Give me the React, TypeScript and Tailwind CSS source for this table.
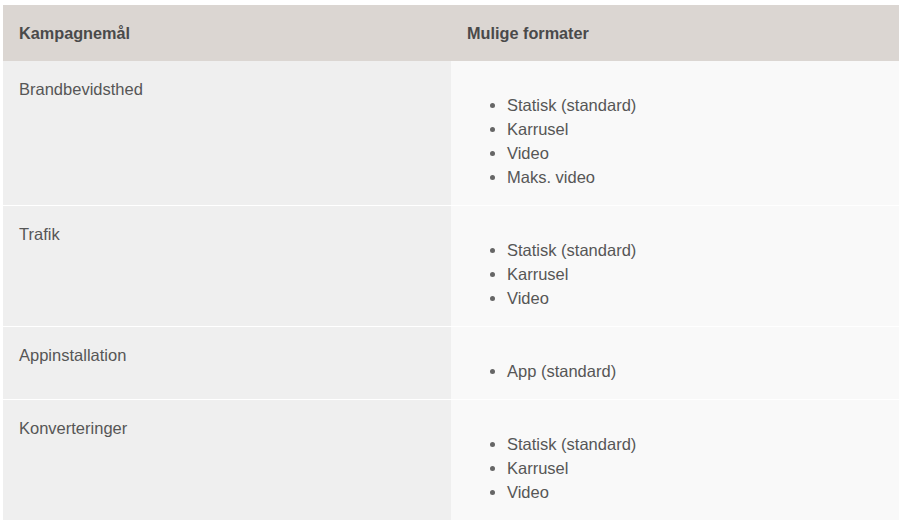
const rows: { goal: string; formats: string[] }[] = [
  { goal: "Brandbevidsthed", formats: ["Statisk (standard)", "Karrusel", "Video", "Maks. video"] },
  { goal: "Trafik", formats: ["Statisk (standard)", "Karrusel", "Video"] },
  { goal: "Appinstallation", formats: ["App (standard)"] },
  { goal: "Konverteringer", formats: ["Statisk (standard)", "Karrusel", "Video"] },
];

export default function App() {
  return (
    <div className="min-h-screen bg-white pt-[5px] pl-[3px] font-[family-name:Liberation_Sans,Arial,sans-serif]">
      <div className="w-[896px]">
        <div className="grid grid-cols-2 bg-[#dbd6d2] text-[16.25px] leading-6 font-bold text-[#4a4a4a]">
          <div className="p-4">Kampagnemål</div>
          <div className="p-4">Mulige formater</div>
        </div>
        {rows.map((row, i) => (
          <div
            key={row.goal}
            className={`grid grid-cols-2 text-[16.5px] leading-6 text-[#565656] ${i > 0 ? "border-t border-white" : ""}`}
          >
            <div className="bg-[#efefef] p-4">{row.goal}</div>
            <div className="bg-[#f9f9f9] p-4">
              <ul className="mt-4 list-disc pl-10 marker:text-[#666]">
                {row.formats.map((f) => (
                  <li key={f}>{f}</li>
                ))}
              </ul>
            </div>
          </div>
        ))}
      </div>
    </div>
  );
}
